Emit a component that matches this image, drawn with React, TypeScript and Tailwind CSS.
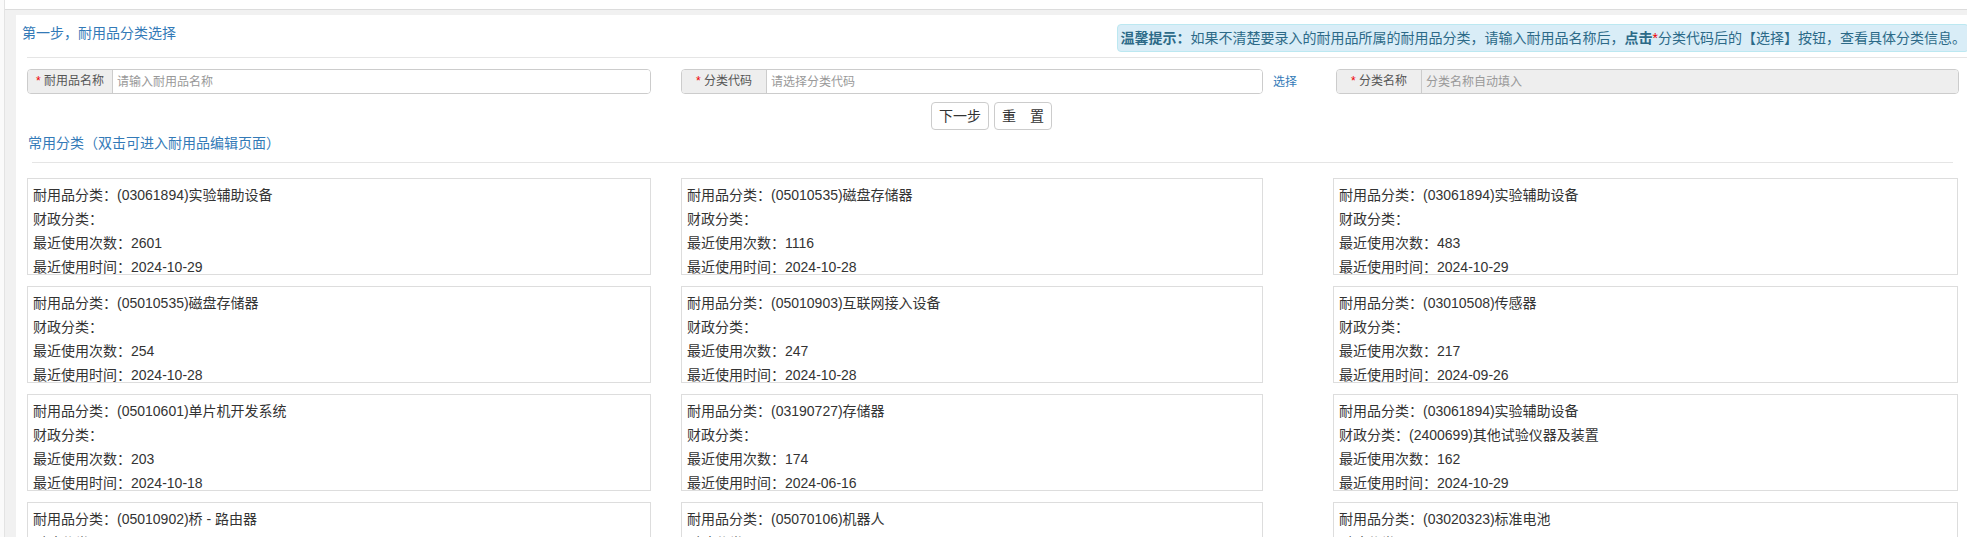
import React from 'react'

interface CategoryCard {
  category: string
  finance: string
  count: number
  lastUsed: string
}

const cards: CategoryCard[] = [
  { category: '(03061894)实验辅助设备', finance: '', count: 2601, lastUsed: '2024-10-29' },
  { category: '(05010535)磁盘存储器', finance: '', count: 1116, lastUsed: '2024-10-28' },
  { category: '(03061894)实验辅助设备', finance: '', count: 483, lastUsed: '2024-10-29' },
  { category: '(05010535)磁盘存储器', finance: '', count: 254, lastUsed: '2024-10-28' },
  { category: '(05010903)互联网接入设备', finance: '', count: 247, lastUsed: '2024-10-28' },
  { category: '(03010508)传感器', finance: '', count: 217, lastUsed: '2024-09-26' },
  { category: '(05010601)单片机开发系统', finance: '', count: 203, lastUsed: '2024-10-18' },
  { category: '(03190727)存储器', finance: '', count: 174, lastUsed: '2024-06-16' },
  { category: '(03061894)实验辅助设备', finance: '(2400699)其他试验仪器及装置', count: 162, lastUsed: '2024-10-29' },
  { category: '(05010902)桥 - 路由器', finance: '', count: 151, lastUsed: '2024-10-22' },
  { category: '(05070106)机器人', finance: '', count: 143, lastUsed: '2024-10-25' },
  { category: '(03020323)标准电池', finance: '', count: 139, lastUsed: '2024-10-21' },
]

// column widths/offsets shared by the card rows
const colClass = ['w-[624px]', 'ml-[30px] w-[582px]', 'ml-[70px] w-[625px]']

function InputGroup({
  label,
  placeholder,
  className,
  readOnly,
}: {
  label: string
  placeholder: string
  className: string
  readOnly?: boolean
}) {
  return (
    <div className={`flex h-[25px] border border-[#ccc] rounded-[4px] overflow-hidden shrink-0 ${className}`}>
      <div className="w-[85px] shrink-0 bg-[#eee] border-r border-[#ccc] text-center text-[12px] leading-[23px] text-[#555]">
        <span className="text-[#e00]">*</span> {label}
      </div>
      <input
        readOnly={readOnly}
        placeholder={placeholder}
        className={`flex-1 min-w-0 pl-[4px] text-[12px] outline-none placeholder:text-[#999] ${
          readOnly ? 'bg-[#eee]' : 'bg-white'
        }`}
      />
    </div>
  )
}

function Card({ item, className }: { item: CategoryCard; className: string }) {
  return (
    <div className={`h-[97px] shrink-0 overflow-hidden border border-[#ddd] px-[5px] pt-[4px] text-[14px] leading-[24px] text-[#333] ${className}`}>
      <div className="whitespace-nowrap">耐用品分类：{item.category}</div>
      <div className="whitespace-nowrap">财政分类：{item.finance}</div>
      <div className="whitespace-nowrap">最近使用次数：{item.count}</div>
      <div className="whitespace-nowrap">最近使用时间：{item.lastUsed}</div>
    </div>
  )
}

export default function App() {
  const rows: CategoryCard[][] = []
  for (let i = 0; i < cards.length; i += 3) rows.push(cards.slice(i, i + 3))

  return (
    <div className="h-[537px] w-full overflow-hidden bg-white flex font-['Liberation_Sans','Noto_Sans_CJK_SC',sans-serif]">
      <div className="w-[4px] shrink-0 bg-[#fafafa]" />
      <div className="flex-1 min-w-0 border-l border-[#e3e3e3] flex flex-col">
        <div className="h-[10px] shrink-0 bg-white border-b border-[#dcdcdc]" />
        <div className="flex-1 bg-[#f1f1f1] pt-[5px] pl-[11px]">
          <div className="h-full bg-white">
            {/* header */}
            <div className="flex items-start pt-[8px] pl-[6px]">
              <div className="text-[14px] leading-[20px] text-[#337ab7]">第一步，耐用品分类选择</div>
              <div className="ml-auto -mr-[2px] mt-[1px] shrink-0 whitespace-nowrap rounded-[4px] border border-[#bce8f1] bg-[#d9edf7] pl-[3px] pr-[2px] text-[14px] leading-[26px] text-[#2c6a88]">
                <b>温馨提示：</b>如果不清楚要录入的耐用品所属的耐用品分类，请输入耐用品名称后，<b>点击</b>
                <span className="text-[#e00]">*</span>分类代码后的【选择】按钮，查看具体分类信息。
              </div>
            </div>
            <div className="mt-[5px] ml-[11px] border-t border-[#e5e5e5]" />

            {/* form */}
            <div className="mt-[11px] pl-[11px] flex items-center">
              <InputGroup className="w-[624px]" label="耐用品名称" placeholder="请输入耐用品名称" />
              <InputGroup className="ml-[30px] w-[582px]" label="分类代码" placeholder="请选择分类代码" />
              <a className="ml-[10px] text-[12px] text-[#337ab7] cursor-pointer">选择</a>
              <InputGroup className="ml-[39px] w-[623px]" label="分类名称" placeholder="分类名称自动填入" readOnly />
            </div>

            <div className="mt-[8px] flex justify-center gap-[5px]">
              <button className="w-[58px] h-[28px] rounded-[4px] border border-[#ccc] bg-white text-[14px] text-[#333]">下一步</button>
              <button className="w-[58px] h-[28px] rounded-[4px] border border-[#ccc] bg-white text-[14px] text-[#333]">重　置</button>
            </div>

            <div className="mt-[3px] ml-[12px] text-[14px] leading-[20px] text-[#337ab7]">常用分类（双击可进入耐用品编辑页面）</div>
            <div className="mt-[9px] ml-[16px] mr-[14px] border-t border-[#e5e5e5]" />

            {/* cards */}
            <div className="mt-[15px] pl-[11px] flex flex-col gap-[11px]">
              {rows.map((row, r) => (
                <div key={r} className="flex">
                  {row.map((item, c) => (
                    <Card key={c} item={item} className={colClass[c]} />
                  ))}
                </div>
              ))}
            </div>
          </div>
        </div>
      </div>
    </div>
  )
}
